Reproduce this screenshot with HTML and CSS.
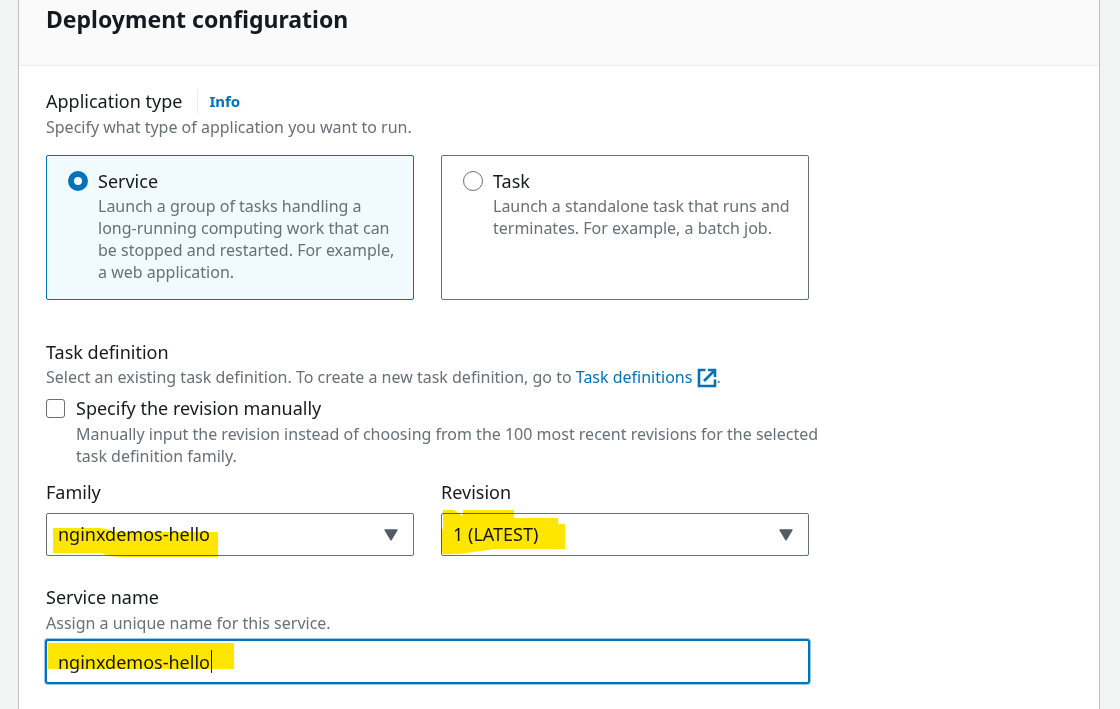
FILE: index.html
```html
<!DOCTYPE html>
<html lang="en">
<head>
<meta charset="utf-8">
<title>Deployment configuration</title>
<link rel="stylesheet" href="styles.css">
</head>
<body>
<main class="panel">
  <header class="panel-header"><h2 class="panel-title">Deployment configuration</h2></header>
  <form class="form">
    <section class="group" role="radiogroup" aria-labelledby="apptype-label">
      <div class="label-row">
        <span class="label" id="apptype-label">Application type</span>
        <a class="info" href="#info">Info</a>
      </div>
      <p class="hint">Specify what type of application you want to run.</p>
      <div class="columns tiles">
        <label class="tile tile-selected">
          <input class="radio" type="radio" name="apptype" checked>
          <span class="choice-text">
            <span class="label">Service</span>
            <span class="hint hint-tight">Launch a group of tasks handling a long-running computing work that can be stopped and restarted. For example, a web application.</span>
          </span>
        </label>
        <label class="tile">
          <input class="radio" type="radio" name="apptype">
          <span class="choice-text">
            <span class="label">Task</span>
            <span class="hint hint-tight">Launch a standalone task that runs and terminates. For example, a batch job.</span>
          </span>
        </label>
      </div>
    </section>

    <section class="group group-definition">
      <h3 class="label">Task definition</h3>
      <p class="hint hint-tight">Select an existing task definition. To create a new task definition, go to <a class="link" href="#definitions">Task definitions <svg class="external" viewBox="0 0 20 20" aria-hidden="true"><path d="M8.500 2H2v16h16v-6.500M11 2h7v7M18 2L7 13" fill="none" stroke="currentColor" stroke-width="2.6"/></svg></a>.</p>
      <label class="check-row">
        <input class="checkbox" type="checkbox">
        <span class="choice-text">
          <span class="label">Specify the revision manually</span>
          <span class="hint">Manually input the revision instead of choosing from the 100 most recent revisions for the selected task definition family.</span>
        </span>
      </label>
      <div class="columns selects">
        <div class="field">
          <label class="label" for="family">Family</label>
          <div class="control">
            <select class="select" id="family"><option>nginxdemos-hello</option></select>
            <svg class="arrow" viewBox="0 0 14 12" aria-hidden="true"><path d="M1 1h12L7 11z" fill="#545b64" stroke="#545b64" stroke-width="1.4" stroke-linejoin="round"/></svg>
            <svg class="marker" width="200" height="60" aria-hidden="true"><path d="M7 18H52Q61 18 68 22H172V47H76Q64 47 55 43H7z"/></svg>
          </div>
        </div>
        <div class="field">
          <label class="label" for="revision">Revision</label>
          <div class="control">
            <select class="select" id="revision"><option>1 (LATEST)</option></select>
            <svg class="arrow" viewBox="0 0 14 12" aria-hidden="true"><path d="M1 1h12L7 11z" fill="#545b64" stroke="#545b64" stroke-width="1.4" stroke-linejoin="round"/></svg>
            <svg class="marker" width="200" height="60" aria-hidden="true"><path d="M2 0H13L22 6V0H73V8H117V14H124V39H55L32 42Q16 45 2 44L0 40V19H2z"/></svg>
          </div>
        </div>
      </div>
    </section>

    <section class="group">
      <label class="label" for="service">Service name</label>
      <p class="hint">Assign a unique name for this service.</p>
      <div class="control control-name">
        <input class="text-input" id="service" type="text" value="nginxdemos-hello">
        <svg class="marker" width="200" height="60" aria-hidden="true"><path d="M2 6H188V32H2z"/></svg>
        <span class="caret"></span>
      </div>
    </section>
  </form>
</main>
</body>
</html>
```
FILE: styles.css
```css
* { box-sizing: border-box; }
body {
  margin: 0;
  padding: 0 20px 0 18px;
  background: #f2f3f3;
  color: #16191f;
  font: 18px/25px "Noto Sans", sans-serif;
}
.panel {
  min-height: 100vh;
  background: #fff;
  border: solid #bcc1c3;
  border-width: 0 1px;
}
.panel-header {
  padding: 4px 27px 31px;
  background: #fafafa;
  border-bottom: 1px solid #eaeded;
}
.panel-title { margin: 0; font-size: 23px; line-height: 30px; font-weight: 700; }
.form { max-width: 817px; padding: 23px 27px 0; }
.group { margin: 0 0 40px; }
.group-definition { margin-bottom: 29px; }
.group:last-child { margin-bottom: 0; padding-bottom: 24px; }
.label { display: block; margin: 0; font-size: 18px; line-height: 25px; font-weight: 400; }
.hint { display: block; margin: 2px 0 0; font-size: 16px; line-height: 22px; color: #687078; }
.hint-tight { margin-top: 1px; }
.label-row { display: flex; align-items: center; gap: 15px; }
.info {
  padding-left: 11px;
  border-left: 1px solid #eaeded;
  color: #0073bb;
  font-size: 15px;
  font-weight: 700;
  text-decoration: none;
}
.link { color: #0073bb; text-decoration: none; }
.external { width: 20px; height: 20px; vertical-align: -5px; }
.columns { display: grid; grid-template-columns: 1fr 1fr; gap: 27px; }
.tiles { margin-top: 17px; }
.tile {
  display: flex;
  gap: 10px;
  padding: 13px 16px 16px 21px;
  border: 1px solid #687078;
  border-radius: 2px;
}
.tile-selected { border-color: #0073bb; background: #f1faff; }
.choice-text { flex: 1; min-width: 0; }
.radio, .checkbox {
  appearance: none;
  flex: none;
  width: 20px;
  height: 20px;
  margin: 2px 0 0;
  border: 1px solid #687078;
  border-radius: 50%;
  background: #fff;
}
.radio:checked { border: 6px solid #0073bb; }
.checkbox { border-radius: 3px; width: 19px; height: 19px; margin-top: 3px; }
.check-row { display: flex; gap: 11px; margin: 8px -16px 0 0; }
.selects { margin-top: 13px; }
.control { position: relative; margin-top: 8px; }
.control-name { margin-top: 6px; }
.select, .text-input {
  display: block;
  appearance: none;
  width: 100%;
  height: 43px;
  margin: 0;
  padding: 0 11px;
  border: 1px solid #687078;
  border-radius: 2px;
  background: #fff;
  color: #16191f;
  font: 18px/25px "Noto Sans", sans-serif;
}
.text-input { border-color: #0073bb; box-shadow: 0 0 0 1px #0073bb, 0 0 0 2px #99c7e4; outline: 0; }
.arrow { position: absolute; right: 16px; top: 16px; width: 14px; height: 12px; pointer-events: none; }
.marker { position: absolute; left: 0; top: -3px; fill: #ffe600; mix-blend-mode: multiply; pointer-events: none; }
.caret { position: absolute; left: 165px; top: 10px; width: 1px; height: 23px; background: #16191f; }
```
